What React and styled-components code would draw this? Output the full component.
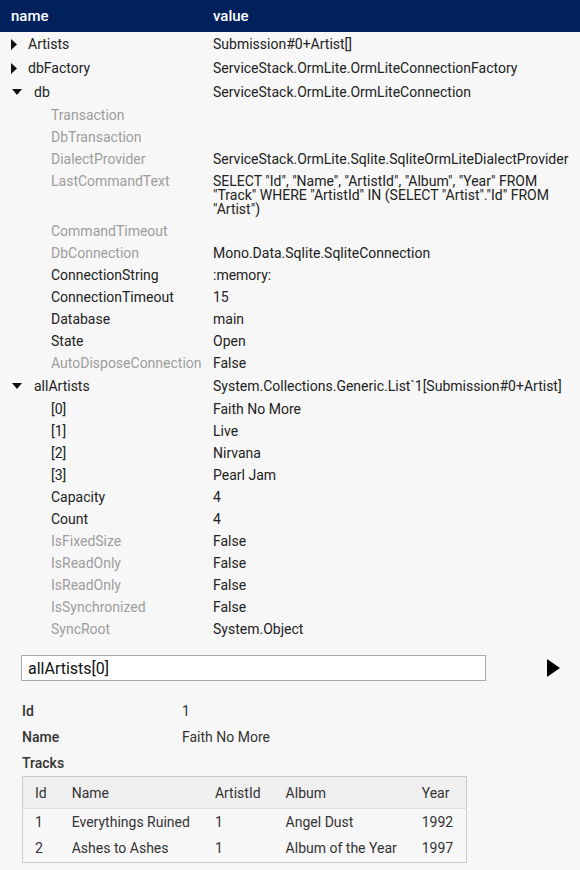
import React from "react";
import styled, { createGlobalStyle } from "styled-components";

const GlobalStyle = createGlobalStyle`
  html, body {
    margin: 0;
    padding: 0;
    background: #f7f7f7;
  }
  body {
    font-family: Roboto, "Liberation Sans", Arial, sans-serif;
    color: #222;
  }
`;

const Page = styled.div`
  width: 580px;
  min-height: 870px;
  background: #f7f7f7;
`;

const HeadBar = styled.div`
  display: grid;
  grid-template-columns: 202px 1fr;
  height: 32px;
  align-items: center;
  padding-left: 11px;
  background: #00215b;
  color: #fff;
  font-size: 15px;
  font-weight: 500;
`;

const Tree = styled.div`
  display: flex;
  flex-direction: column;
`;

const Row = styled.div`
  display: grid;
  grid-template-columns: ${({ $child }) => ($child ? "162px" : "202px")} 1fr;
  align-items: start;
  padding: ${({ $child }) => ($child ? "4px 5px 4px 51px" : "5px 5px 5px 11px")};
  font-size: 14px;
  line-height: 14px;
`;

const Name = styled.div`
  display: flex;
  align-items: center;
  color: ${({ $dim }) => ($dim ? "#9d9d9d" : "#222")};
`;

const Value = styled.div`
  color: #222;
`;

const CaretBox = styled.span`
  display: inline-flex;
  align-items: center;
  width: ${({ $open }) => ($open ? "11px" : "6px")};
  margin-right: 11px;
  margin-left: ${({ $open }) => ($open ? "1px" : "0")};
`;

const Caret = ({ open }) => (
  <CaretBox $open={open}>
    {open ? (
      <svg width="10" height="6" viewBox="0 0 10 6">
        <polygon points="0,0 10,0 5,6" fill="#111" />
      </svg>
    ) : (
      <svg width="6" height="11" viewBox="0 0 6 11">
        <polygon points="0,0 6,5.5 0,11" fill="#111" />
      </svg>
    )}
  </CaretBox>
);

const Query = styled.div`
  display: flex;
  align-items: center;
  padding: 15px 0 0 21px;
`;

const Input = styled.input`
  box-sizing: border-box;
  width: 465px;
  height: 26px;
  border: 1px solid #aaa;
  background: #fff;
  padding: 0 6px;
  font-family: Roboto, "Liberation Sans", Arial, sans-serif;
  font-size: 16px;
  color: #111;
  outline: none;
`;

const RunButton = styled.button`
  border: 0;
  background: none;
  padding: 0;
  margin-left: 61px;
  display: flex;
  cursor: pointer;
`;

const Details = styled.div`
  display: grid;
  grid-template-columns: 160px 1fr;
  grid-auto-rows: 26px;
  align-items: center;
  padding: 17px 0 0 22px;
  font-size: 14px;
`;

const Label = styled.div`
  font-weight: 500;
  color: #333;
`;

const DetailValue = styled.div`
  color: #333;
`;

const TracksTitle = styled.div`
  padding: 0 0 0 22px;
  height: 26px;
  display: flex;
  align-items: center;
  font-size: 14px;
  font-weight: 500;
  color: #333;
`;

const Table = styled.table`
  margin: 0 0 0 22px;
  border-collapse: collapse;
  border: 1px solid #ccc;
  font-size: 14px;
  color: #333;

  th {
    background: #efefef;
    font-weight: 400;
    text-align: left;
    height: 31px;
    padding: 0 13px 0 12px;
    border-bottom: 1px solid #ddd;
  }
  td {
    padding: 0 13px 0 12px;
    height: 26px;
  }
  tbody tr:last-child td {
    padding-bottom: 1px;
  }
`;

const tree = [
  { name: "Artists", value: "Submission#0+Artist[]" },
  { name: "dbFactory", value: "ServiceStack.OrmLite.OrmLiteConnectionFactory" },
  {
    name: "db",
    value: "ServiceStack.OrmLite.OrmLiteConnection",
    open: true,
    children: [
      { name: "Transaction", dim: true },
      { name: "DbTransaction", dim: true },
      { name: "DialectProvider", value: "ServiceStack.OrmLite.Sqlite.SqliteOrmLiteDialectProvider", dim: true },
      {
        name: "LastCommandText",
        value: 'SELECT "Id", "Name", "ArtistId", "Album", "Year" FROM "Track" WHERE "ArtistId" IN (SELECT "Artist"."Id" FROM "Artist")',
        dim: true,
      },
      { name: "CommandTimeout", dim: true },
      { name: "DbConnection", value: "Mono.Data.Sqlite.SqliteConnection", dim: true },
      { name: "ConnectionString", value: ":memory:" },
      { name: "ConnectionTimeout", value: "15" },
      { name: "Database", value: "main" },
      { name: "State", value: "Open" },
      { name: "AutoDisposeConnection", value: "False", dim: true },
    ],
  },
  {
    name: "allArtists",
    value: "System.Collections.Generic.List`1[Submission#0+Artist]",
    open: true,
    children: [
      { name: "[0]", value: "Faith No More" },
      { name: "[1]", value: "Live" },
      { name: "[2]", value: "Nirvana" },
      { name: "[3]", value: "Pearl Jam" },
      { name: "Capacity", value: "4" },
      { name: "Count", value: "4" },
      { name: "IsFixedSize", value: "False", dim: true },
      { name: "IsReadOnly", value: "False", dim: true },
      { name: "IsReadOnly", value: "False", dim: true },
      { name: "IsSynchronized", value: "False", dim: true },
      { name: "SyncRoot", value: "System.Object", dim: true },
    ],
  },
];

const tracks = [
  { id: 1, name: "Everythings Ruined", artistId: 1, album: "Angel Dust", year: 1992 },
  { id: 2, name: "Ashes to Ashes", artistId: 1, album: "Album of the Year", year: 1997 },
];

const App = () => (
  <Page>
    <GlobalStyle />
    <HeadBar>
      <span>name</span>
      <span>value</span>
    </HeadBar>
    <Tree>
      {tree.map((node, i) => (
        <React.Fragment key={i}>
          <Row>
            <Name>
              <Caret open={node.open} />
              {node.name}
            </Name>
            <Value>{node.value}</Value>
          </Row>
          {node.children &&
            node.children.map((c, j) => (
              <Row $child key={j}>
                <Name $dim={c.dim}>{c.name}</Name>
                <Value>{c.value}</Value>
              </Row>
            ))}
        </React.Fragment>
      ))}
    </Tree>
    <Query>
      <Input defaultValue="allArtists[0]" />
      <RunButton aria-label="run">
        <svg width="13" height="18" viewBox="0 0 13 18">
          <polygon points="0,0 13,9 0,18" fill="#000" />
        </svg>
      </RunButton>
    </Query>
    <Details>
      <Label>Id</Label>
      <DetailValue>1</DetailValue>
      <Label>Name</Label>
      <DetailValue>Faith No More</DetailValue>
    </Details>
    <TracksTitle>Tracks</TracksTitle>
    <Table>
      <thead>
        <tr>
          <th>Id</th>
          <th>Name</th>
          <th>ArtistId</th>
          <th>Album</th>
          <th>Year</th>
        </tr>
      </thead>
      <tbody>
        {tracks.map((t) => (
          <tr key={t.id}>
            <td>{t.id}</td>
            <td>{t.name}</td>
            <td>{t.artistId}</td>
            <td>{t.album}</td>
            <td>{t.year}</td>
          </tr>
        ))}
      </tbody>
    </Table>
  </Page>
);

export default App;
